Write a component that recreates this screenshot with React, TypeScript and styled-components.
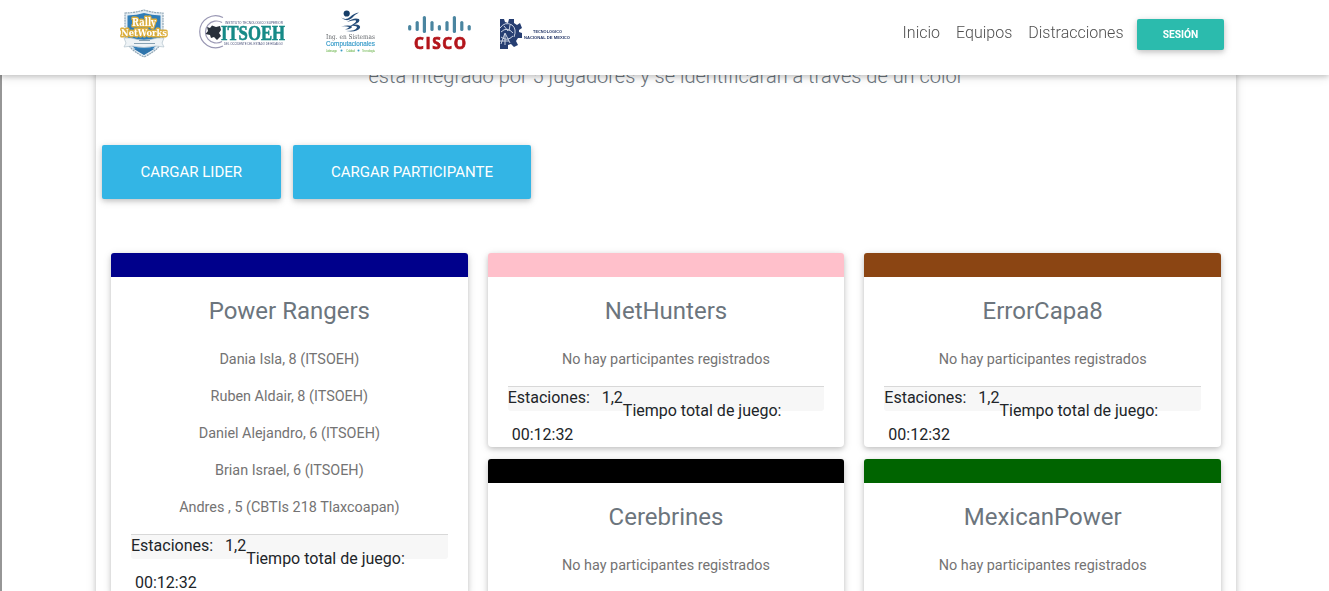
import React from 'react';
import styled, { createGlobalStyle } from 'styled-components';

const GlobalStyle = createGlobalStyle`
  *, *::before, *::after { box-sizing: border-box; }
  html, body { margin: 0; height: 591px; overflow: hidden; background: #fff; }
  body { font-family: Roboto, sans-serif; font-weight: 400; font-size: 16px; line-height: 1.5; color: #212529; }
  h4, p { margin: 0; }
`;

const depth = '0 2px 5px 0 rgba(0,0,0,.16), 0 2px 10px 0 rgba(0,0,0,.12)';

const Navbar = styled.nav`
  position: fixed;
  inset: 0 0 auto 0;
  z-index: 10;
  height: 75px;
  padding: 0 105px 0 119px;
  display: flex;
  justify-content: space-between;
  background: #fff;
  box-shadow: ${depth};
`;

const Brands = styled.div`
  display: flex;
  align-items: flex-start;
  padding-top: 8px;
`;

const Logo = styled.svg<{ $gap?: number }>`
  display: block;
  flex: none;
  margin-right: ${(p) => p.$gap ?? 0}px;
  overflow: visible;
`;

const Links = styled.div`
  display: flex;
  align-items: flex-start;
  padding-top: 19px;
`;

const NavLink = styled.a`
  margin-top: 2px;
  padding: 0 8px;
  font-weight: 300;
  color: #4f4f4f;
`;

const Button = styled.button<{ $large?: boolean }>`
  border: 0;
  border-radius: 2px;
  color: #fff;
  font-family: inherit;
  text-transform: uppercase;
  white-space: nowrap;
  box-shadow: ${depth};
  background: ${(p) => (p.$large ? '#33b5e5' : '#2bbbad')};
  width: ${(p) => (p.$large ? 'auto' : '87px')};
  height: ${(p) => (p.$large ? '54px' : '31px')};
  margin: ${(p) => (p.$large ? '0' : '0 0 0 5.5px')};
  padding: ${(p) => (p.$large ? '0 38.4px' : '0')};
  font-size: ${(p) => (p.$large ? '15.04px' : '10.24px')};
  font-weight: ${(p) => (p.$large ? 400 : 700)};
`;

const Page = styled.div`
  height: 591px;
  padding-left: 1px;
  overflow: hidden;
  border-left: 2px solid #969696;
`;

const Container = styled.main`
  width: 1140px;
  min-height: 720px;
  margin: 0 auto;
  padding: 61px 15px 0;
  box-shadow: ${depth};
`;

const Lead = styled.p`
  height: 30px;
  font-size: 20px;
  font-weight: 300;
  text-align: center;
  color: #6c757d;
`;

const Actions = styled.div`
  display: flex;
  gap: 12px;
  margin: 54px 0 54px -9px;
`;

const Columns = styled.div`
  display: grid;
  grid-template-columns: repeat(3, 1fr);
  column-gap: 20px;
  align-items: start;
`;

const Column = styled.div`
  display: grid;
  gap: 12px;
`;

const Card = styled.article`
  background: #fff;
  border-radius: 4px;
  box-shadow: ${depth};
`;

const ColorBar = styled.div<{ $color: string }>`
  height: 24px;
  border-radius: 3px 3px 0 0;
  background: ${(p) => p.$color};
`;

const CardBody = styled.div`
  padding: 20px 20px 0;
`;

const TeamName = styled.h4`
  height: 52px;
  font-size: 24px;
  font-weight: 400;
  line-height: 28.8px;
  text-align: center;
  color: #6c757d;
`;

const Member = styled.p`
  margin-bottom: 16px;
  font-size: 14.4px;
  line-height: 21px;
  text-align: center;
  color: #747373;
`;

const Stations = styled.div`
  display: flex;
  align-items: flex-start;
  height: 25px;
  border-top: 1px solid #d8d8d8;
  border-radius: 0 0 3px 3px;
  background: #f7f7f7;
  white-space: pre;
  line-height: 22px;
`;

const TimeLabel = styled.span`
  margin-top: 13px;
`;

const Time = styled.p`
  padding: 12px 0 0 4px;
  line-height: 24px;
`;

type Team = { name: string; color: string; members?: string[] };

const columns: Team[][] = [
  [
    {
      name: 'Power Rangers',
      color: '#00008b',
      members: [
        'Dania Isla, 8 (ITSOEH)',
        'Ruben Aldair, 8 (ITSOEH)',
        'Daniel Alejandro, 6 (ITSOEH)',
        'Brian Israel, 6 (ITSOEH)',
        'Andres , 5 (CBTIs 218 Tlaxcoapan)',
      ],
    },
  ],
  [
    { name: 'NetHunters', color: '#ffc0cb' },
    { name: 'Cerebrines', color: '#000000' },
  ],
  [
    { name: 'ErrorCapa8', color: '#8b4513' },
    { name: 'MexicanPower', color: '#006400' },
  ],
];

const TeamCard = ({ name, color, members = ['No hay participantes registrados'] }: Team) => (
  <Card>
    <ColorBar $color={color} />
    <CardBody>
      <TeamName>{name}</TeamName>
      {members.map((m) => (
        <Member key={m}>{m}</Member>
      ))}
      <Stations>
        <span>{'Estaciones: \u00a0 1,2'}</span>
        <TimeLabel>Tiempo total de juego:</TimeLabel>
      </Stations>
      <Time>00:12:32</Time>
    </CardBody>
  </Card>
);

const RallyLogo = () => (
  <Logo $gap={27} width="50" height="50" viewBox="0 0 50 50" fontFamily="DejaVu Serif, serif" fontWeight="700">
    <path d="M6 5 Q15 5 25 2 Q35 5 44 5 L44 28 Q44 40 25 49 Q7 40 6 28Z" fill="#e4edf3" stroke="#8fa5b5" strokeWidth="1.2" strokeDasharray="2 .7" />
    <path d="M8.5 7.5 Q18 7 25 5 Q33 7 41.5 7.5 V28 Q41 38 25 46.5 Q9 38 8.5 28Z" fill="#2f7db8" />
    <path d="M5 30 L12 30 Q25 34 38 30 L45 30 L43 35 L45 39 L37 38 Q25 41 13 38 L5 39 L7 35Z" fill="#eef3f6" stroke="#b3c3cd" strokeWidth=".7" />
    <path d="M20 32.5 H31 M15 35.5 H36" stroke="#7c98aa" strokeWidth=".9" />
    <path d="M14 40.5 Q24 42.5 36 40.5 L25 47Z" fill="#2f74ab" />
    <g fill="#fff" stroke="#dcae3c" strokeWidth="3" paintOrder="stroke" strokeLinejoin="round" textAnchor="middle">
      <text x="25" y="18" fontSize="11.5" textLength="24" lengthAdjust="spacingAndGlyphs">Rally</text>
      <text x="25" y="28.2" fontSize="10" textLength="46" lengthAdjust="spacingAndGlyphs">NetWorks</text>
    </g>
  </Logo>
);

const ItsoehLogo = () => (
  <Logo $gap={39} width="90" height="44" viewBox="0 0 90 44">
    <g fill="none" stroke="#9a98b4" strokeWidth="1.2">
      <path d="M27 9.5 A16 16 0 1 0 27 38" />
      <path d="M26 14.5 A11 11 0 1 0 26 33.5" />
    </g>
    <path d="M11 19 L14 20 L16 17.5 L20 19 L24 18 L25 22 L23 25 L25 28 L21 32 L18 29 L15 30 L14 27 L9.500 26 L12 23Z" fill="#28303b" />
    <text x="25" y="31.700" fontFamily="Liberation Serif, serif" fontWeight="700" fontSize="20.5" fill="#168a87" stroke="#168a87" strokeWidth=".6" textLength="64" lengthAdjust="spacingAndGlyphs">ITSOEH</text>
    <g fontFamily="Liberation Sans, sans-serif" fill="#444b75">
      <text x="29" y="15.500" fontSize="3.700" textLength="58" lengthAdjust="spacingAndGlyphs">INSTITUTO TECNOLOGICO SUPERIOR</text>
      <text x="28" y="36.500" fontSize="3.700" textLength="59" lengthAdjust="spacingAndGlyphs">DEL OCCIDENTE DEL ESTADO DE HIDALGO</text>
    </g>
  </Logo>
);

const SystemsLogo = () => (
  <Logo $gap={32} width="51" height="46" viewBox="0 0 51 46">
    <circle cx="21.700" cy="5.500" r="3.100" fill="#173e68" />
    <g fill="#234b78">
      <path d="M16 9.500 Q21 12.500 25 9 Q29 5 34 4.500 Q29 7 27 10 Q22 14.500 16 9.500Z" />
      <path d="M22 14 Q29 9 34 11 Q36 14 29 16.500 Q36 16 35 20 Q32 24.500 21 23 Q31 23 32 19.500 Q32 17 25 18 Q32 14 31 12.500 Q29 11.500 22 14Z" />
      <path d="M16 18.500 Q24 16.500 27 18.500 Q27 21 20 21.500 Q24 20 24 19 Q21 18 16 18.500Z" />
    </g>
    <text x="1" y="31.200" fontFamily="DejaVu Serif, serif" fontSize="6.800" fill="#63676b" textLength="49" lengthAdjust="spacingAndGlyphs">Ing. en Sistemas</text>
    <g fontFamily="Liberation Sans, sans-serif">
      <text x="1" y="37.500" fontSize="7" fill="#3399c8" stroke="#3399c8" strokeWidth=".15" textLength="49" lengthAdjust="spacingAndGlyphs">Computacionales</text>
      <g fontSize="3" fill="#68b348">
        <text x="1" y="43.500" textLength="11">Liderazgo</text>
        <text x="21" y="43.500" textLength="9">Calidad</text>
        <text x="37" y="43.500" textLength="13">Tecnología</text>
      </g>
    </g>
    <circle cx="16.500" cy="42.500" r="1" fill="#369bc4" />
    <circle cx="33.500" cy="42.500" r="1" fill="#369bc4" />
  </Logo>
);

const ciscoBars = [
  [1.7, 17, 5.5], [9.2, 13, 10], [16.4, 8, 17], [24, 13, 10], [31.4, 17, 5.5],
  [39, 13, 10], [46.4, 8, 17], [53.8, 13, 10], [61.2, 17, 5.5],
];

const CiscoLogo = () => (
  <Logo $gap={29} width="63" height="46" viewBox="0 0 63 46">
    {ciscoBars.map(([x, y, h]) => (
      <rect key={x} x={x - 1.6} y={y} width="3.2" height={h} rx="1.6" fill="#4a85a0" />
    ))}
    <text x="6" y="41.300" fontFamily="Open Sans, sans-serif" fontWeight="700" fontSize="15.500" fill="#b3151b" stroke="#b3151b" strokeWidth=".7" textLength="52">CISCO</text>
  </Logo>
);

const TecnmLogo = () => (
  <Logo width="71" height="46" viewBox="0 0 71 46">
    <path d="M0 11 H4 L5 14 L8 15 L9 11 L14 11 L14 15 L17 17 L20 15 L22 20 L19 22 L19 24 L22 25 L22 30 L18 30 L16 33 L18 37 L14 39 L11 36 L8 37 L8 41 H0Z" fill="#263e72" />
    <path d="M0 20 Q5 13 12 17 Q17 21 14 29 M1 24 Q7 18 13 25 M4 18 L8 23 M10 17 L9 23 M1 36 L5 25 L10 35 M5 26 V37 M0 33 H9 M1 29 Q7 34 13 28" fill="none" stroke="#dbe2ee" strokeWidth=".9" />
    <g fontFamily="Liberation Sans, sans-serif" fontWeight="700" fill="#27396a" fontSize="4.200">
      <text x="33" y="25.200" textLength="29" lengthAdjust="spacingAndGlyphs">TECNOLOGICO</text>
      <text x="24" y="31" textLength="46" lengthAdjust="spacingAndGlyphs">NACIONAL DE MEXICO</text>
    </g>
  </Logo>
);

export default function App() {
  return (
    <>
      <GlobalStyle />
      <Navbar>
        <Brands>
          <RallyLogo />
          <ItsoehLogo />
          <SystemsLogo />
          <CiscoLogo />
          <TecnmLogo />
        </Brands>
        <Links>
          <NavLink>Inicio</NavLink>
          <NavLink>Equipos</NavLink>
          <NavLink>Distracciones</NavLink>
          <Button>Sesión</Button>
        </Links>
      </Navbar>
      <Page>
        <Container>
          <Lead>está integrado por 5 jugadores y se identificarán a través de un color</Lead>
          <Actions>
            <Button $large>Cargar Lider</Button>
            <Button $large>Cargar Participante</Button>
          </Actions>
          <Columns>
            {columns.map((teams) => (
              <Column key={teams[0].name}>
                {teams.map((team) => (
                  <TeamCard key={team.name} {...team} />
                ))}
              </Column>
            ))}
          </Columns>
        </Container>
      </Page>
    </>
  );
}
